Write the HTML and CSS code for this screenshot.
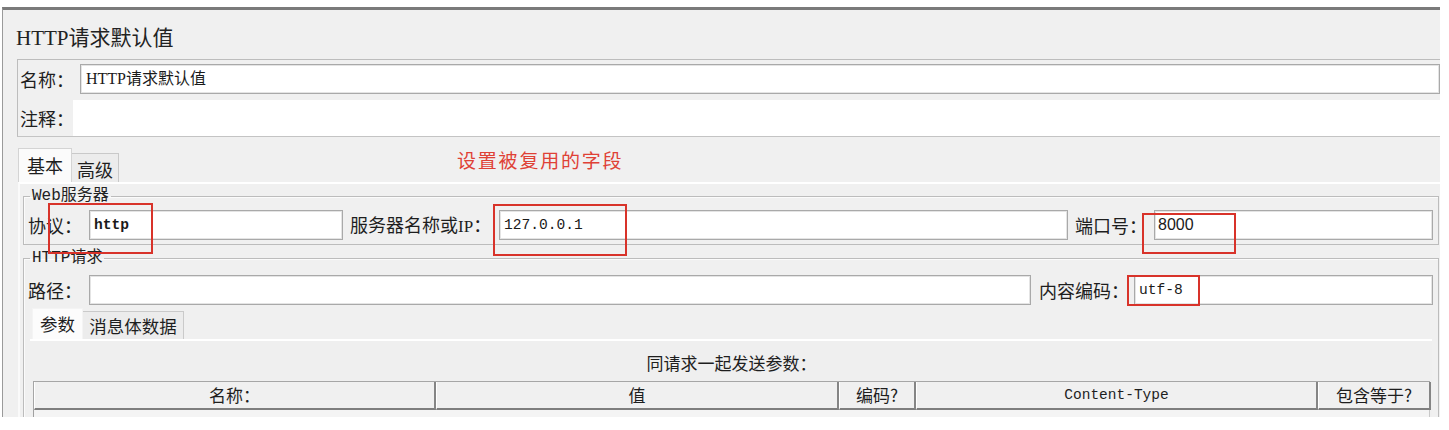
FILE: index.html
```html
<!DOCTYPE html>
<html lang="zh-CN">
<head>
<meta charset="utf-8">
<title>HTTP请求默认值</title>
<link rel="stylesheet" href="styles.css">
</head>
<body>
<div class="panel">
  <div class="title">HTTP请求默认值</div>
  <div class="namebox">
    <div class="name-row">
      <span class="lbl lbl-name">名称：</span>
      <div class="input input-name">HTTP请求默认值</div>
    </div>
    <div class="comment-row">
      <span class="lbl lbl-comment">注释：</span>
      <div class="textarea"></div>
    </div>
  </div>
  <div class="tabbar">
    <div class="tab tab-active tab-basic">基本</div>
    <div class="tab tab-adv">高级</div>
    <div class="note">设置被复用的字段</div>
  </div>
  <div class="tabpanel">
    <fieldset class="group group-web">
      <legend>Web服务器</legend>
      <div class="frow">
        <span class="lbl l-proto">协议：</span>
        <div class="input i-proto mono bold">http</div>
        <span class="lbl l-host">服务器名称或<span class="lat">IP</span>：</span>
        <div class="input i-host mono">127.0.0.1</div>
        <span class="lbl l-port">端口号：</span>
        <div class="input i-port sans">8000</div>
      </div>
    </fieldset>
    <fieldset class="group group-http">
      <legend>HTTP请求</legend>
      <div class="frow">
        <span class="lbl l-path">路径：</span>
        <div class="input i-path"></div>
        <span class="lbl l-enc">内容编码：</span>
        <div class="input i-enc mono">utf-8</div>
      </div>
      <div class="subtabs">
        <div class="stab stab-active stab-params">参数</div>
        <div class="stab stab-body">消息体数据</div>
      </div>
      <div class="subpanel">
        <div class="caption">同请求一起发送参数：</div>
        <div class="thead">
          <div class="th">名称：</div>
          <div class="th">值</div>
          <div class="th">编码?</div>
          <div class="th mono-h">Content-Type</div>
          <div class="th">包含等于?</div>
        </div>
        <div class="tbody"></div>
      </div>
    </fieldset>
  </div>
</div>
<div class="mark m1"></div>
<div class="mark m2"></div>
<div class="mark m3"></div>
<div class="mark m4"></div>
</body>
</html>
```
FILE: styles.css
```css
* { box-sizing: border-box; }

body {
  margin: 0;
  background: #ffffff;
  font-family: "Noto Sans CJK SC", sans-serif;
  color: #1e1e1e;
  position: relative;
  width: 1449px;
  height: 430px;
  overflow: hidden;
}

.panel {
  margin: 7px 0 0 2px;
  width: 1438px;
  height: 410px;
  background: #f0f0f0;
  border-top: 3px solid #7a7a7a;
  border-left: 1px solid #9a9a9a;
  overflow: hidden;
}

.title {
  height: 49px;
  padding: 7px 0 0 13px;
  line-height: 42px;
  font-size: 21px;
  font-family: "Liberation Serif", "Noto Sans CJK SC", serif;
  color: #222;
}

.namebox {
  margin-left: 14px;
  border-top: 1px solid #bdbdbd;
  border-left: 1px solid #bdbdbd;
  border-bottom: 1px solid #c4c4c4;
}

.lbl {
  flex: 0 0 auto;
  font-size: 18px;
  line-height: 30px;
  white-space: nowrap;
  color: #1e1e1e;
}

.lat { font-family: "Liberation Serif", serif; font-size: 17px; }

.name-row {
  display: flex;
  align-items: flex-start;
  height: 40px;
}
.lbl-name { width: 62px; padding-left: 2px; margin-top: 4px; }

.input {
  height: 30px;
  background: #fff;
  border: 1px solid #a9a9a9;
  box-shadow: inset 0 0 0 1px #e4e4e4;
  padding-left: 4px;
  line-height: 28px;
  white-space: nowrap;
  overflow: hidden;
  font-size: 16px;
  color: #1a1a1a;
}
.input-name {
  flex: 1;
  margin-top: 4px;
  padding-left: 5px;
  font-family: "Liberation Serif", "Noto Sans CJK SC", serif;
}

.comment-row {
  display: flex;
  align-items: center;
  height: 36px;
}
.lbl-comment { width: 55px; padding-left: 2px; }
.textarea {
  flex: 1;
  height: 36px;
  background: #fff;
}

.tabbar {
  display: flex;
  align-items: flex-end;
  height: 45px;
  margin-left: 15px;
}
.tab {
  font-size: 18px;
  text-align: center;
  border: 1px solid #c9c9c9;
  border-bottom: none;
}
.tab-basic {
  width: 54px;
  height: 34px;
  line-height: 32px;
  background: #fbfbfb;
  border-color: #d4d4d4;
}
.tab-adv {
  width: 47px;
  height: 29px;
  line-height: 30px;
  background: #ececec;
  border-left: none;
}
.note {
  align-self: flex-start;
  margin: 10px 0 0 338px;
  font-size: 19px;
  line-height: 26px;
  letter-spacing: 1.8px;
  color: #df4136;
}

.tabpanel {
  margin-left: 15px;
  height: 240px;
  border-top: 2px solid #ffffff;
  border-left: 2px solid #fafafa;
  padding: 3px 1px 0 3px;
}

.group {
  margin: 0;
  min-width: 0;
  padding: 5px 5px 4px 4px;
  border: 1px solid #bcbcbc;
  box-shadow: inset 1px 1px 0 #fbfbfb;
}
.group legend {
  margin-left: 2px;
  padding: 0 2px;
  font-size: 16px;
  line-height: 18px;
  font-family: "Liberation Mono", "Noto Sans CJK SC", monospace;
  color: #222;
}
.group-http {
  margin-top: 4px;
  padding-top: 8px;
  padding-bottom: 0;
  height: 220px;
}

.frow {
  display: flex;
  align-items: center;
  height: 30px;
}
.l-proto { width: 61px; }
.i-proto { width: 254px; }
.l-host { width: 149px; margin-left: 7px; }
.i-host { width: 569px; }
.l-port { width: 79px; margin-left: 7px; }
.i-port { flex: 1; padding-left: 3px; }
.l-path { width: 61px; }
.i-path { width: 942px; }
.l-enc { width: 95px; margin-left: 8px; }
.i-enc { flex: 1; }

.mono { font-family: "Liberation Mono", monospace; font-size: 14.6px; }
.bold { font-weight: bold; }
.sans { font-family: "Liberation Sans", sans-serif; font-size: 16px; }

.subtabs {
  display: flex;
  align-items: flex-end;
  height: 34px;
  margin-left: 4px;
}
.stab {
  font-size: 17.5px;
  text-align: center;
  border: 1px solid #cacaca;
  border-bottom: none;
}
.stab-params {
  width: 51px;
  height: 31px;
  line-height: 30px;
  background: #fcfcfc;
  border-color: #f4f4f4;
}
.stab-body {
  width: 101px;
  height: 28px;
  line-height: 28px;
  background: #ececec;
  border-left: none;
}

.subpanel {
  margin: 0 1px 0 2px;
  border-top: 2px solid #ffffff;
  padding: 0 2px 0 3px;
  height: 120px;
  background: #efefef;
}
.caption {
  height: 40px;
  padding-top: 4px;
  line-height: 36px;
  text-align: center;
  font-size: 17px;
}
.thead {
  display: grid;
  grid-template-columns: 402px 403px 77px 402px 113px;
  height: 29px;
  border-top: 1px solid #a6a6a6;
  border-left: 1px solid #a6a6a6;
}
.th {
  text-align: center;
  font-size: 17px;
  line-height: 26px;
  background: #f0f0f0;
  border-left: 1px solid #ffffff;
  border-right: 2px solid #858585;
  border-bottom: 2px solid #7e7e7e;
  white-space: nowrap;
}
.mono-h { font-family: "Liberation Mono", monospace; font-size: 14.5px; }
.tbody {
  height: 40px;
  background: #f4f4f4;
  border-left: 1px solid #a0a0a0;
  border-right: 1px solid #c8c8c8;
}

.mark {
  position: absolute;
  border: 2px solid #d8332a;
}
.m1 { left: 48px; top: 203px; width: 105px; height: 51px; }
.m2 { left: 493px; top: 204px; width: 134px; height: 52px; }
.m3 { left: 1142px; top: 213px; width: 94px; height: 41px; }
.m4 { left: 1127px; top: 275px; width: 73px; height: 31px; }
```
